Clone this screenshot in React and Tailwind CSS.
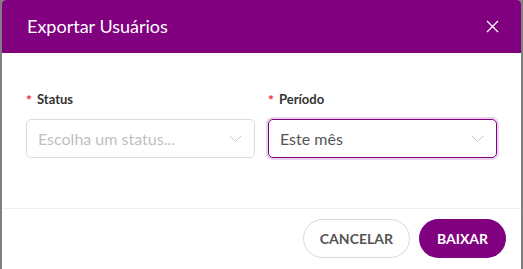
import React from "react";

function Chevron() {
  return (
    <svg width="13" height="8" viewBox="0 0 13 8" fill="none" className="text-[#c8c8c8]">
      <path d="M1 1 L6.5 6.5 L12 1" stroke="currentColor" strokeWidth="1" />
    </svg>
  );
}

function Field({ label, value, placeholder, focused }) {
  return (
    <div className="flex-1 flex flex-col">
      <label className="flex items-center text-[13px] font-bold text-[#333] h-[20px] mb-[9px]">
        <span className="text-[#f5222d] mr-[5px] text-[14px] leading-none">*</span>
        {label}
      </label>
      <div
        className={
          focused
            ? "h-[39px] rounded-[5px] border border-[#800080] ring-2 ring-[#e9d3ec] flex items-center justify-between pl-[11px] pr-[12px]"
            : "h-[39px] rounded-[5px] border border-[#dcdcdc] flex items-center justify-between pl-[11px] pr-[12px]"
        }
      >
        <span className={value ? "text-[16px] text-[#555]" : "text-[16px] text-[#bfbfbf]"}>
          {value || placeholder}
        </span>
        <Chevron />
      </div>
    </div>
  );
}

export default function App() {
  return (
    <div
      className="w-[523px] h-[269px] bg-[#808080] px-[2px] overflow-hidden"
      style={{ fontFamily: "Lato, 'Open Sans', sans-serif" }}
    >
      <div className="bg-white h-full rounded-t-[4px] flex flex-col">
        <div className="h-[53px] bg-[#800080] rounded-t-[4px] flex items-center justify-between pl-[25px] pr-[22px]">
          <h4 className="text-white text-[18px]">Exportar Usuários</h4>
          <svg width="13" height="13" viewBox="0 0 13 13" fill="none">
            <path d="M1 1 L12 12 M12 1 L1 12" stroke="white" strokeWidth="1.3" />
          </svg>
        </div>
        <div className="flex gap-[13px] px-[24px] pt-[37px] h-[156px] border-b border-[#f0f0f0]">
          <Field label="Status" placeholder="Escolha um status..." />
          <Field label="Período" value="Este mês" focused />
        </div>
        <div className="flex justify-end gap-[9px] pt-[10px] pr-[15px]">
          <button className="h-[39px] px-[16px] rounded-full border border-[#d9d9d9] text-[14px] font-bold text-[#555]">
            CANCELAR
          </button>
          <button className="h-[39px] px-[18px] rounded-full bg-[#800080] text-[14px] font-bold text-white">
            BAIXAR
          </button>
        </div>
      </div>
    </div>
  );
}
